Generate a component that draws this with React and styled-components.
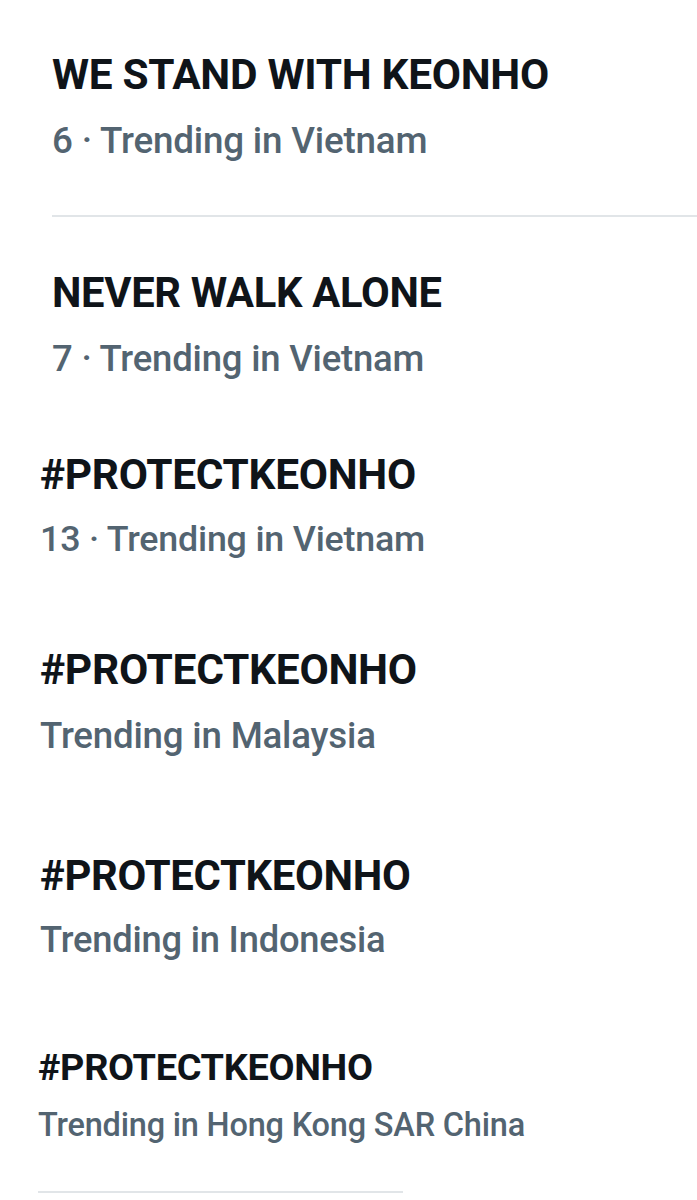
import React from 'react';
import styled, { createGlobalStyle } from 'styled-components';

const GlobalStyle = createGlobalStyle`
  html, body {
    margin: 0;
    padding: 0;
    background: #ffffff;
  }
  body {
    font-family: Roboto, "Liberation Sans", Arial, sans-serif;
    -webkit-font-smoothing: antialiased;
  }
`;

const SPage = styled.main`
  width: 697px;
  min-height: 1200px;
  overflow: hidden;
  display: flex;
  flex-direction: column;
  background: #ffffff;
`;

const STrend = styled.section`
  display: flex;
  flex-direction: column;
  padding-left: ${({ $indent }) => $indent}px;
  margin-top: ${({ $top }) => $top}px;
  gap: ${({ $gap }) => $gap}px;
`;

const STitle = styled.h2`
  margin: 0;
  font-size: ${({ $size }) => $size}px;
  line-height: 1.2;
  font-weight: 700;
  letter-spacing: -0.3px;
  color: #0f1419;
  white-space: nowrap;
`;

const SMeta = styled.p`
  margin: 0;
  font-size: ${({ $size }) => $size}px;
  line-height: 1.2;
  font-weight: 500;
  letter-spacing: -0.2px;
  color: #536471;
  white-space: nowrap;
`;

const SDivider = styled.hr`
  margin: ${({ $top }) => $top}px 0 0 ${({ $indent }) => $indent}px;
  width: ${({ $width }) => ($width ? `${$width}px` : 'auto')};
  border: none;
  border-top: 2px solid #e1e5e8;
  align-self: ${({ $width }) => ($width ? 'flex-start' : 'stretch')};
`;

const trends = [
  { title: 'WE STAND WITH KEONHO', meta: '6 · Trending in Vietnam', indent: 52, top: 49.6, gap: 18.5, titleSize: 42.4, metaSize: 36.8, divider: { top: 52 } },
  { title: 'NEVER WALK ALONE', meta: '7 · Trending in Vietnam', indent: 52, top: 51, gap: 19, titleSize: 41.7, metaSize: 36.5 },
  { title: '#PROTECTKEONHO', meta: '13 · Trending in Vietnam', indent: 40, top: 68.6, gap: 18, titleSize: 42.4, metaSize: 35.8 },
  { title: '#PROTECTKEONHO', meta: 'Trending in Malaysia', indent: 40, top: 83, gap: 18.5, titleSize: 42.5, metaSize: 36.7 },
  { title: '#PROTECTKEONHO', meta: 'Trending in Indonesia', indent: 40, top: 93, gap: 17, titleSize: 41.8, metaSize: 36.3 },
  { title: '#PROTECTKEONHO', meta: 'Trending in Hong Kong SAR China', indent: 38, top: 83.5, gap: 15.8, titleSize: 37.8, metaSize: 32.5, divider: { top: 45.5, width: 365 } },
];

function Trend({ item }) {
  return (
    <>
      <STrend $indent={item.indent} $top={item.top} $gap={item.gap}>
        <STitle $size={item.titleSize}>{item.title}</STitle>
        <SMeta $size={item.metaSize}>{item.meta}</SMeta>
      </STrend>
      {item.divider && (
        <SDivider $top={item.divider.top} $indent={item.indent} $width={item.divider.width} />
      )}
    </>
  );
}

function App() {
  return (
    <>
      <GlobalStyle />
      <SPage>
        {trends.map((item, i) => (
          <Trend key={i} item={item} />
        ))}
      </SPage>
    </>
  );
}

export default App;
